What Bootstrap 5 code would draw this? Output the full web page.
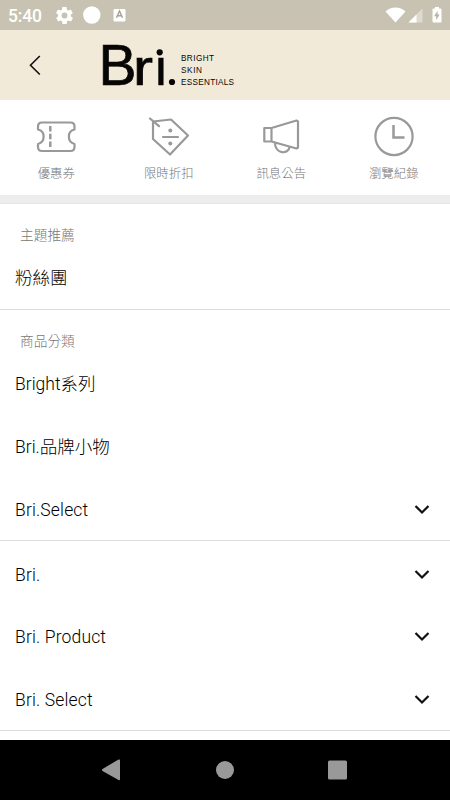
<!DOCTYPE html>
<html lang="zh-Hant">
<head>
<meta charset="utf-8">
<meta name="viewport" content="width=device-width, initial-scale=1">
<title>Bri.</title>
<link href="https://cdn.jsdelivr.net/npm/bootstrap@5.3.0/dist/css/bootstrap.min.css" rel="stylesheet">
<style>
body{font-family:Roboto,"Noto Sans CJK TC",sans-serif;color:#111;height:800px}
svg{display:block;flex:none}
.status{height:30px;background:#c8c2b2;padding:0 7px 0 8px}
.clock{font-size:17.5px;font-weight:500;line-height:30px;width:48px;letter-spacing:-.2px;padding-top:1px}
.brandbar{height:70px;background:#f2ead9}
.shortcuts{height:95px}
.shortcut{color:#999;font-size:12.4px;font-weight:300;line-height:18px;padding-top:13px}
.shortcut span{margin-top:6px;color:#777}
.gap-band{height:9px;background:#ededed;border-bottom:1px solid #e7e7e7}
.group{border-bottom:1px solid #dedede}
.group-title{height:42.5px;padding:20.5px 20px 0;font-size:13.7px;font-weight:300;color:#777}
.entry{height:62.5px;padding:1px 20px 0 15px;font-size:17.5px;font-weight:300;color:#000}
.latin{letter-spacing:.15px;padding-top:2px}
.group-last{padding-top:1.5px}
.sysnav{height:60px;background:#000}
</style>
</head>
<body class="bg-white overflow-hidden d-flex flex-column">
<header>
  <div class="status d-flex align-items-center text-white">
    <span class="clock">5:40</span>
    <svg width="17" height="17" viewBox="2 2 20 20" fill="#fff"><path d="M19.4 13c0-.3.1-.6.1-1s0-.7-.1-1l2.100-1.600c.2-.2.2-.4.1-.6l-2-3.500c-.1-.2-.4-.3-.6-.2l-2.500 1c-.5-.4-1.100-.7-1.700-1l-.4-2.600c0-.3-.2-.5-.5-.5h-4c-.2 0-.4.2-.5.4l-.4 2.700c-.6.2-1.100.6-1.700 1l-2.500-1c-.2-.1-.5 0-.6.2l-2 3.500c-.1.2-.1.500.1.600L4.600 11c0 .3-.1.700-.1 1s0 .7.1 1l-2.100 1.600c-.2.200-.2.400-.1.600l2 3.500c.1.200.4.300.6.200l2.500-1c.5.400 1.100.700 1.700 1l.4 2.700c0 .200.2.400.5.400h4c.2 0 .5-.2.500-.400l.4-2.700c.6-.2 1.100-.6 1.700-1l2.500 1c.2.100.5 0 .6-.2l2-3.500c.1-.2.1-.5-.1-.6zM12 15.500a3.500 3.500 0 1 1 0-7 3.500 3.500 0 0 1 0 7z"/></svg>
    <svg class="ms-2 me-auto" width="48" height="20"><circle cx="10.800" cy="10" r="8.700" fill="#fff"/><rect x="32.500" y="4" width="12" height="12.500" rx="1" fill="#fff"/><path d="M35.500 12.700 38.500 6l3 6.700M36.600 10.800h3.800" fill="none" stroke="#aaa38f" stroke-width="1.500"/></svg>
    <svg width="60" height="22" fill="#fff"><path d="M2.500 7.500C8 2.200 17 2.200 22.500 7.500L12.500 18.500z"/><path d="M25.500 18.500 39.500 4.500v14z" opacity=".4"/><path d="M25.500 18.500 33.500 10.500v8z"/><path d="M52 3h4V4.500H57.500q1 0 1 1V17.500q0 1-1 1h-7q-1 0-1-1v-12q0-1 1-1h1.500z"/><path d="m54.500 7-3.500 5.300h2.200V16l3.500-5.500h-2z" fill="#b9b39f"/></svg>
  </div>
  <div class="brandbar d-flex align-items-center">
    <svg width="450" height="70" font-family="Liberation Sans, Arial, sans-serif">
      <path d="M39.800 26 30.500 35.300l9.300 9.200" fill="none" stroke="#111" stroke-width="1.600"/>
      <g fill="#080605">
        <text x="98.500" y="55" font-size="57" stroke="#080605" stroke-width=".7">B<tspan x="133" font-size="50" textLength="20" lengthAdjust="spacingAndGlyphs">r</tspan><tspan x="154" font-size="50">ı</tspan></text>
        <circle cx="159.700" cy="22.300" r="3.100"/>
        <circle cx="172" cy="52" r="3.100"/>
        <g font-size="8.200">
          <text x="181" y="31" textLength="33">BRIGHT</text>
          <text x="181" y="43" textLength="21">SKIN</text>
          <text x="181" y="55" textLength="53">ESSENTIALS</text>
        </g>
      </g>
    </svg>
  </div>
</header>
<nav class="shortcuts row g-0 text-center">
  <div class="shortcut col-3 d-flex flex-column align-items-center"><svg width="46" height="46" fill="none" stroke="#999" stroke-width="2.200" stroke-linejoin="round"><path d="M8 9.500H37.500Q41.500 9.500 41.500 13.500V16.500C34 18 34 29 41.500 31V34Q41.500 38 37.500 38H9Q5 38 5 34V31C12.500 29 12.500 18 5 16.500V13.500Q5 9.500 9 9.500z"/><path d="M17.300 13v21" stroke-width="2.500" stroke-dasharray="5.500 2.300"/></svg><span>優惠券</span></div>
  <div class="shortcut col-3 d-flex flex-column align-items-center"><svg width="46" height="46" fill="none" stroke="#999" stroke-width="2.200" stroke-linejoin="round" stroke-linecap="round"><path d="M7 8.500 25 6.500 42 22.500 24 41.500 7 26zM4 5.500 13 13.200M17 24h15"/><g fill="#999" stroke="none"><circle cx="24.300" cy="17.500" r="2"/><circle cx="24.300" cy="30.500" r="2"/></g></svg><span>限時折扣</span></div>
  <div class="shortcut col-3 d-flex flex-column align-items-center"><svg width="46" height="46" fill="none" stroke="#999" stroke-width="2.200" stroke-linejoin="round"><path d="M6.300 15H13.500L38.500 7.500 40 8.500V34.500L38.500 35.500 13.500 28.500H6.300zM13.500 15v13.500M17 30C17 41 30.500 42 31.500 34"/></svg><span>訊息公告</span></div>
  <div class="shortcut col-3 d-flex flex-column align-items-center"><svg width="46" height="46" fill="none" stroke="#999" stroke-width="2.200"><circle cx="23" cy="23.500" r="18.600"/><path d="M22.500 12v12.500h11" stroke-width="2.500"/></svg><span>瀏覽紀錄</span></div>
</nav>
<div class="gap-band"></div>
<main class="flex-grow-1">
  <section class="group">
    <div class="group-title d-flex align-items-center">主題推薦</div>
    <div class="entry d-flex align-items-center">粉絲團</div>
  </section>
  <section class="group">
    <div class="group-title d-flex align-items-center">商品分類</div>
    <div class="entry d-flex align-items-center">Bright系列</div>
    <div class="entry d-flex align-items-center">Bri.品牌小物</div>
    <div class="entry latin d-flex align-items-center justify-content-between">Bri.Select<svg width="16" height="12" fill="none" stroke="#111" stroke-width="2.200"><path d="m1.500 2 6.500 6.500 6.500-6.500"/></svg></div>
  </section>
  <section class="group group-last">
    <div class="entry latin d-flex align-items-center justify-content-between">Bri.<svg width="16" height="12" fill="none" stroke="#111" stroke-width="2.200"><path d="m1.500 2 6.500 6.500 6.500-6.500"/></svg></div>
    <div class="entry latin d-flex align-items-center justify-content-between">Bri. Product<svg width="16" height="12" fill="none" stroke="#111" stroke-width="2.200"><path d="m1.500 2 6.500 6.500 6.500-6.500"/></svg></div>
    <div class="entry latin d-flex align-items-center justify-content-between">Bri. Select<svg width="16" height="12" fill="none" stroke="#111" stroke-width="2.200"><path d="m1.500 2 6.500 6.500 6.500-6.500"/></svg></div>
  </section>
</main>
<footer class="sysnav d-flex">
  <svg width="450" height="60" fill="#999"><path d="M102.500 29 118.500 19.500q1.500-.5 1.500 1V39.500q0 1-1.500.5L102.500 31q-1-1 0-2z"/><circle cx="225" cy="30" r="9"/><rect x="328" y="20.500" width="19" height="19" rx="1.500"/></svg>
</footer>
<script src="https://cdn.jsdelivr.net/npm/bootstrap@5.3.0/dist/js/bootstrap.bundle.min.js"></script>
</body>
</html>
